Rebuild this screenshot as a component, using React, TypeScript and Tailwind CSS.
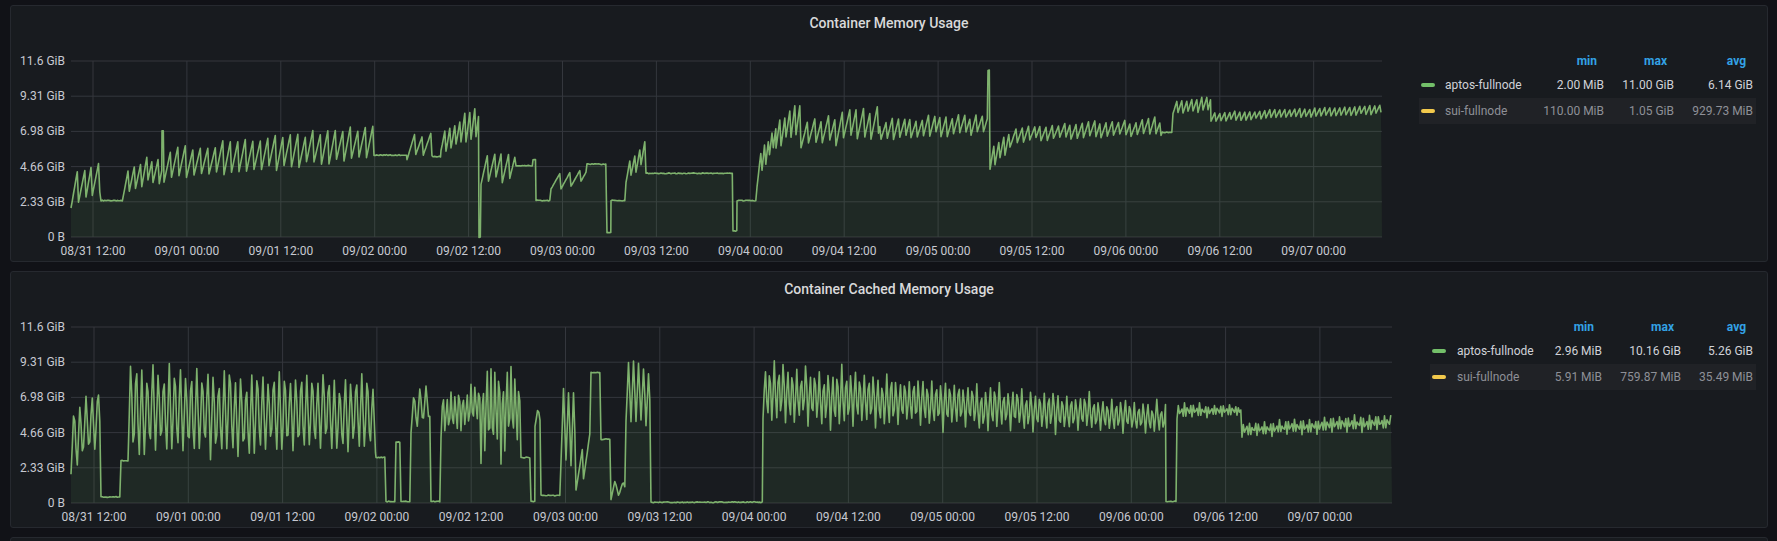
type Seg = [number, number, "saw" | "tri" | "flat" | "noise", number, number?, number?, number?, number?];

const yTicks = ["0 B", "2.33 GiB", "4.66 GiB", "6.98 GiB", "9.31 GiB", "11.6 GiB"];
const xTicks = [
  "08/31 12:00", "09/01 00:00", "09/01 12:00", "09/02 00:00", "09/02 12:00", "09/03 00:00", "09/03 12:00",
  "09/04 00:00", "09/04 12:00", "09/05 00:00", "09/05 12:00", "09/06 00:00", "09/06 12:00", "09/07 00:00",
];

const memSegs: Seg[] = [
  [70, 100, "saw", 1.8, 2.5, 4.5, 5.2, 7],
  [100, 122, "flat", 2.4],
  [122, 161, "saw", 2.6, 3.5, 4.8, 5.8, 6],
  [161, 163, "flat", 7],
  [163, 373, "saw", 3.6, 5, 6.3, 7.9, 7.5],
  [373, 406, "flat", 5.4],
  [406, 432, "saw", 5.1, 5.1, 7.1, 7.1, 8],
  [432, 440, "flat", 5.3],
  [440, 478, "saw", 5.5, 6.2, 7.2, 9.8, 5],
  [478, 480, "flat", 0],
  [480, 515, "saw", 3.2, 3.6, 5.8, 6, 7],
  [515, 532, "flat", 4.7],
  [532, 535, "flat", 5.1],
  [535, 550, "flat", 2.4],
  [550, 586, "saw", 3, 3.6, 4.2, 4.8, 10],
  [586, 606, "flat", 4.8],
  [606, 610, "flat", 0.3],
  [610, 625, "flat", 2.4],
  [625, 645, "saw", 3.5, 5, 5.2, 6.8, 5],
  [645, 732, "flat", 4.2],
  [732, 736, "flat", 0.4],
  [736, 756, "flat", 2.4],
  [756, 775, "saw", 3, 6, 5.5, 7.8, 4],
  [775, 800, "saw", 5.8, 6.8, 8.2, 9.8, 5],
  [800, 880, "saw", 5.8, 6.3, 7.8, 9.2, 7],
  [880, 987, "saw", 6.2, 6.7, 8, 8.4, 6],
  [987, 989, "flat", 11],
  [989, 1010, "saw", 4.2, 5.8, 6.2, 7.4, 5],
  [1010, 1162, "saw", 6.1, 6.6, 7.4, 8, 6],
  [1162, 1172, "flat", 6.9],
  [1172, 1210, "saw", 8, 8.3, 9.2, 9.7, 5],
  [1210, 1381, "saw", 7.6, 8.1, 8.4, 8.9, 5],
];

const cacheSegs: Seg[] = [
  [70, 100, "tri", 1.8, 3, 7.2, 8.4, 6],
  [100, 120, "flat", 0.4],
  [120, 127, "flat", 2.8],
  [127, 375, "tri", 2.3, 2.8, 10, 9, 5.5],
  [375, 385, "flat", 3],
  [385, 395, "flat", 0.1],
  [395, 400, "flat", 4],
  [400, 410, "flat", 0.1],
  [410, 430, "tri", 4.5, 5, 8, 8, 6],
  [430, 440, "flat", 0.1],
  [440, 480, "tri", 3.8, 4.8, 7.8, 8.2, 4],
  [480, 520, "tri", 2, 3, 9.8, 9.4, 4],
  [520, 530, "flat", 3],
  [530, 534, "flat", 0.1],
  [534, 540, "tri", 5, 5, 6.5, 6.5, 6],
  [540, 560, "flat", 0.5],
  [560, 575, "tri", 2, 2, 8.6, 7.2, 5],
  [575, 590, "saw", 0.5, 1.5, 3.7, 5, 7],
  [590, 600, "flat", 8.6],
  [600, 610, "flat", 4.2],
  [610, 625, "tri", 0.2, 0.5, 1.6, 1.6, 8],
  [625, 650, "tri", 5, 5, 9.5, 9.2, 5],
  [650, 762, "flat", 0.05],
  [762, 1165, "tri", 4.8, 4.4, 9.8, 6.8, 4.5],
  [1165, 1176, "flat", 0.1],
  [1176, 1241, "tri", 5.5, 5.7, 6.7, 6.5, 3],
  [1241, 1391, "tri", 4.3, 4.7, 5.4, 6, 3],
];

function hash(n: number, seed: number) {
  const s = Math.sin(n * 12.9898 + seed * 78.233) * 43758.5453;
  return s - Math.floor(s);
}

function gen(segs: Seg[], seed: number) {
  const pts: [number, number][] = [];
  let k = 0;
  segs.forEach(([x0, x1, kind, a0, a1 = a0, b0 = a0, b1 = b0, p = 6], si) => {
    for (let x = x0; x < x1; x += 1.25) {
      k++;
      const t = (x - x0) / (x1 - x0);
      const lo = a0 + (a1 - a0) * t;
      const hi = b0 + (b1 - b0) * t;
      const idx = Math.floor((x - x0) / p);
      const ph = ((x - x0) % p) / p;
      const h1 = hash(idx + si * 100, seed);
      const h2 = hash(idx + si * 100 + 50, seed + 1);
      const vlo = lo + (hi - lo) * 0.15 * h1;
      const vhi = hi - (hi - lo) * 0.18 * h2;
      let v = lo;
      if (kind === "flat") v = lo + (hash(k, seed) - 0.5) * 0.06;
      else if (kind === "noise") v = lo + (hi - lo) * hash(k, seed);
      else if (kind === "saw") v = vlo + (vhi - vlo) * ph;
      else v = vlo + (vhi - vlo) * (1 - Math.abs(2 * ph - 1));
      pts.push([x, v]);
    }
  });
  return pts;
}

function Chart({ segs, seed, width, plotEnd, first, step }: { segs: Seg[]; seed: number; width: number; plotEnd: number; first: number; step: number }) {
  const ox = 10;
  const y = (v: number) => 191 - (v / 11.6) * 176;
  const pts = gen(segs, seed);
  const line = pts.map(([x, v], i) => `${i ? "L" : "M"}${(x - ox).toFixed(1)},${y(v).toFixed(1)}`).join(" ");
  const area = `${line} L${plotEnd - ox},191 L${70 - ox},191 Z`;
  return (
    <svg width={width} height={217} className="block shrink-0" style={{ fontFamily: "Roboto, sans-serif" }}>
      {yTicks.map((t, i) => (
        <g key={t}>
          <line x1={60} x2={plotEnd - ox} y1={191 - i * 35.2} y2={191 - i * 35.2} stroke="#34373d" />
          <text x={54} y={191 - i * 35.2 + 4} textAnchor="end" fontSize={12} fill="#c7c9d1">{t}</text>
        </g>
      ))}
      {xTicks.map((t, i) => {
        const x = first + i * step - ox;
        return (
          <g key={t}>
            <line x1={x} x2={x} y1={15} y2={191} stroke="#34373d" />
            <text x={x} y={209} textAnchor="middle" fontSize={12} fill="#c7c9d1">{t}</text>
          </g>
        );
      })}
      <path d={area} fill="rgba(115,191,105,0.09)" />
      <path d={line} fill="none" stroke="#7eb26d" strokeWidth={1.6} strokeLinejoin="round" />
    </svg>
  );
}

type Row = { name: string; color: string; min: string; max: string; avg: string; dim?: boolean };

function Legend({ rows, cols, heads }: { rows: Row[]; cols: string; heads: string[] }) {
  return (
    <div className="pt-[4px] text-[12px]">
      <div className={`grid h-[22px] items-center font-bold text-[#33a2e5] ${cols}`}>
        <span />
        <span />
        <span className={`text-right ${heads[0]}`}>min</span>
        <span className={`text-right ${heads[1]}`}>max</span>
        <span className={`text-right ${heads[2]}`}>avg</span>
      </div>
      {rows.map((r) => (
        <div key={r.name} className={`grid h-[26px] items-center ${cols} ${r.dim ? "bg-[#202226] text-[#8e9097]" : "text-[#d0d2d8]"}`}>
          <span className="pl-[2px]">
            <span className="block h-[4px] w-[14px] rounded-sm" style={{ background: r.color }} />
          </span>
          <span>{r.name}</span>
          <span className="pr-[3px] text-right">{r.min}</span>
          <span className="pr-[3px] text-right">{r.max}</span>
          <span className="pr-[3px] text-right">{r.avg}</span>
        </div>
      ))}
    </div>
  );
}

function Panel({ title, children }: { title: string; children: React.ReactNode }) {
  return (
    <div className="ml-[10px] h-[257px] w-[1758px] shrink-0 rounded-[3px] border border-[#26292f] bg-[#181b1f]">
      <div className="h-[40px] pt-[8px] text-center text-[14px] font-medium leading-[18px] text-[#d8d9da]">{title}</div>
      <div className="flex">{children}</div>
    </div>
  );
}

export default function App() {
  return (
    <div className="flex h-[541px] w-[1777px] flex-col gap-[9px] overflow-hidden bg-[#111217] pt-[5px]" style={{ fontFamily: "Roboto, 'Liberation Sans', sans-serif" }}>
      <Panel title="Container Memory Usage">
        <Chart segs={memSegs} seed={3} width={1408} plotEnd={1381} first={92} step={93.9} />
        <div className="w-[337px]">
          <Legend
            cols="grid-cols-[26px_96px_66px_70px_79px]"
            heads={["pr-[10px]", "pr-[10px]", "pr-[10px]"]}
            rows={[
              { name: "aptos-fullnode", color: "#73bf69", min: "2.00 MiB", max: "11.00 GiB", avg: "6.14 GiB" },
              { name: "sui-fullnode", color: "#f2c94c", min: "110.00 MiB", max: "1.05 GiB", avg: "929.73 MiB", dim: true },
            ]}
          />
        </div>
      </Panel>
      <Panel title="Container Cached Memory Usage">
        <Chart segs={cacheSegs} seed={7} width={1419} plotEnd={1391} first={93} step={94.3} />
        <div className="w-[326px]">
          <Legend
            cols="grid-cols-[27px_86px_62px_79px_72px]"
            heads={["pr-[11px]", "pr-[10px]", "pr-[10px]"]}
            rows={[
              { name: "aptos-fullnode", color: "#73bf69", min: "2.96 MiB", max: "10.16 GiB", avg: "5.26 GiB" },
              { name: "sui-fullnode", color: "#f2c94c", min: "5.91 MiB", max: "759.87 MiB", avg: "35.49 MiB", dim: true },
            ]}
          />
        </div>
      </Panel>
      <Panel title="">
        <div />
      </Panel>
    </div>
  );
}
